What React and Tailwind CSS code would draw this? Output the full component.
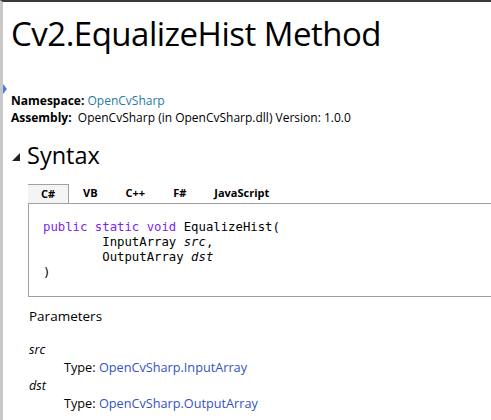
export default function App() {
  const sans = { fontFamily: '"Open Sans", "Noto Sans", sans-serif' };
  const tabs = ['C#', 'VB', 'C++', 'F#', 'JavaScript'];

  return (
    <div className="relative w-[491px] h-[420px] overflow-hidden bg-white border-t-2 border-t-[#3a3a3a] border-l-[3px] border-l-[#c8c8c8] text-black" style={sans}>
      {/* sidebar expander */}
      <div className="absolute left-0 top-[82px] w-0 h-0 border-y-[5px] border-y-transparent border-l-[4px] border-l-[#4a7fd4]"></div>

      <div className="w-[620px] pl-[8px]">
        <h1 className="pt-[10px] h-[90px] text-[33px] leading-[44px] tracking-[-0.5px]">Cv2.EqualizeHist Method</h1>

        <div className="text-[12px] leading-[17px]">
          <div>
            <span className="font-bold">Namespace:</span>&nbsp;
            <span className="text-[#1e7aa8]">OpenCvSharp</span>
          </div>
          <div>
            <span className="font-bold">Assembly:</span>&nbsp; OpenCvSharp (in OpenCvSharp.dll) Version: 1.0.0
          </div>
        </div>

        <div className="mt-[14px] flex items-center h-[30px]">
          <div className="w-0 h-0 border-l-[8px] border-l-transparent border-b-[8px] border-b-[#222] ml-[1px] mt-[4px]"></div>
          <span className="ml-[7px] text-[23.5px] leading-[30px]">Syntax</span>
        </div>

        <div className="mt-[14px] ml-[17px] border-l border-b border-[#a0a0a0] h-[113px]">
          <div className="flex h-[20px] border-b border-[#a0a0a0] text-[11px] font-bold">
            {tabs.map((t, i) => (
              <div
                key={t}
                className={
                  i === 0
                    ? 'w-[41px] -ml-px flex items-center justify-center bg-[#f4f4f4] border-t border-r border-[#a0a0a0]'
                    : 'px-[14px] flex items-center justify-center'
                }
              >
                {t}
              </div>
            ))}
          </div>
          <pre className="pl-[14px] pt-[16px] text-[12.3px] leading-[15px]" style={{ fontFamily: '"DejaVu Sans Mono", "Liberation Mono", monospace' }}>
            <span className="text-[#7a1ff0]">public</span> <span className="text-[#7a1ff0]">static</span> <span className="text-[#7a1ff0]">void</span> EqualizeHist({'\n'}
            {'        '}InputArray <i>src</i>,{'\n'}
            {'        '}OutputArray <i>dst</i>{'\n'}
            )
          </pre>
        </div>

        <div className="ml-[18px]">
          <div className="mt-[9px] text-[13.5px] leading-[20px]">Parameters</div>
          <div className="mt-[14px] text-[12.7px] leading-[18px]">
            <div className="italic">src</div>
            <div className="pl-[35px]">Type: <span className="text-[#3452c4]">OpenCvSharp.InputArray</span></div>
            <div className="italic">dst</div>
            <div className="pl-[35px]">Type: <span className="text-[#3452c4]">OpenCvSharp.OutputArray</span></div>
          </div>
        </div>
      </div>
    </div>
  );
}
